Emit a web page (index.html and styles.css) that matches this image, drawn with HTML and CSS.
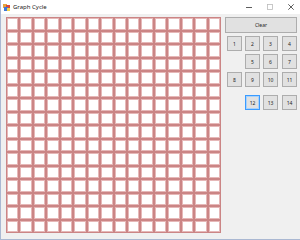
FILE: index.html
```html
<!DOCTYPE html>
<html lang="en">
<head>
  <meta charset="UTF-8">
  <title>Graph Cycle</title>
  <link rel="stylesheet" href="styles.css">
</head>
<body>
  <div class="window">
    <!-- Title bar -->
    <div class="titlebar">
      <svg class="app-icon" width="7" height="7" viewBox="0 0 7 7">
        <rect x="0" y="0" width="4" height="4" fill="#e8a33c"/>
        <rect x="3" y="1" width="4" height="4" fill="#d8463c"/>
        <rect x="1" y="3" width="4" height="4" fill="#3c78d8"/>
        <rect x="4" y="4" width="3" height="3" fill="#f2d14a"/>
      </svg>
      <span class="title">Graph Cycle</span>
      <div class="win-controls">
        <svg width="6" height="6" viewBox="0 0 6 6"><line x1="0" y1="3.5" x2="6" y2="3.5" stroke="#333" stroke-width="0.8"/></svg>
        <svg width="6" height="6" viewBox="0 0 6 6"><rect x="0.5" y="0.5" width="5" height="5" fill="none" stroke="#bbb" stroke-width="0.8"/></svg>
        <svg width="6" height="6" viewBox="0 0 6 6"><path d="M0.3 0.3 L5.7 5.7 M5.7 0.3 L0.3 5.7" stroke="#333" stroke-width="0.8"/></svg>
      </div>
    </div>

    <div class="content">
      <div class="board" id="board"></div>

      <div class="panel">
        <button class="btn clear-btn">Clear</button>
        <div class="btn-row">
          <button class="btn">1</button>
          <button class="btn">2</button>
          <button class="btn">3</button>
          <button class="btn">4</button>
        </div>
        <div class="btn-row">
          <button class="btn">5</button>
          <button class="btn">6</button>
          <button class="btn">7</button>
        </div>
        <div class="btn-row">
          <button class="btn">8</button>
          <button class="btn">9</button>
          <button class="btn">10</button>
          <button class="btn">11</button>
        </div>
        <div class="btn-row last-row">
          <button class="btn focused">12</button>
          <button class="btn">13</button>
          <button class="btn">14</button>
        </div>
      </div>
    </div>
  </div>

  <script>
    // Build the 16 x 16 board
    const board = document.getElementById('board');
    for (let i = 0; i < 16 * 16; i++) {
      const cell = document.createElement('div');
      cell.className = 'cell';
      board.appendChild(cell);
    }
  </script>
</body>
</html>
```

FILE: styles.css
```css
* {
  margin: 0;
  padding: 0;
  box-sizing: border-box;
}

body {
  width: 300px;
  height: 240px;
  overflow: hidden;
  font-family: "Noto Sans", "Liberation Sans", sans-serif;
}

.window {
  width: 300px;
  height: 240px;
  display: flex;
  flex-direction: column;
  background-color: #f0f0f0;
  border-left: 1px solid #aab8d2;
  border-bottom: 1px solid #aab8d2;
}

.titlebar {
  height: 14px;
  display: flex;
  align-items: center;
  background-color: #fff;
  padding-left: 2px;
}

.app-icon {
  margin-right: 3px;
}

.title {
  font-size: 6px;
  color: #222;
}

.win-controls {
  margin-left: auto;
  display: flex;
  gap: 15px;
  padding-right: 6px;
}

.content {
  flex: 1;
  display: flex;
  padding: 3px 0 0 5px;
}

.board {
  width: 215px;
  height: 216px;
  display: grid;
  grid-template-columns: repeat(16, 1fr);
  grid-template-rows: repeat(16, 1fr);
}

.cell {
  background-color: #fff;
  border: 1px solid #cb8585;
  box-shadow: inset 0 0 0 1px #e6b8b8;
}

.panel {
  width: 72px;
  margin-left: 4px;
  display: flex;
  flex-direction: column;
}

.btn {
  width: 15px;
  height: 15px;
  background-color: #e1e1e1;
  border: 1px solid #adadad;
  font-family: "Noto Sans", "Liberation Sans", sans-serif;
  font-size: 5px;
  color: #222;
}

.clear-btn {
  width: 72px;
  height: 16px;
}

.btn-row {
  display: flex;
  justify-content: flex-end;
  gap: 3px;
  margin-top: 3px;
}

.btn-row .btn:last-child {
  margin-left: 1px;
}

.last-row {
  margin-top: 8px;
}

.btn.focused {
  border: 1px solid #3a9bff;
  box-shadow: inset 0 0 0 1px #a8d2fb;
  outline: none;
}
```
